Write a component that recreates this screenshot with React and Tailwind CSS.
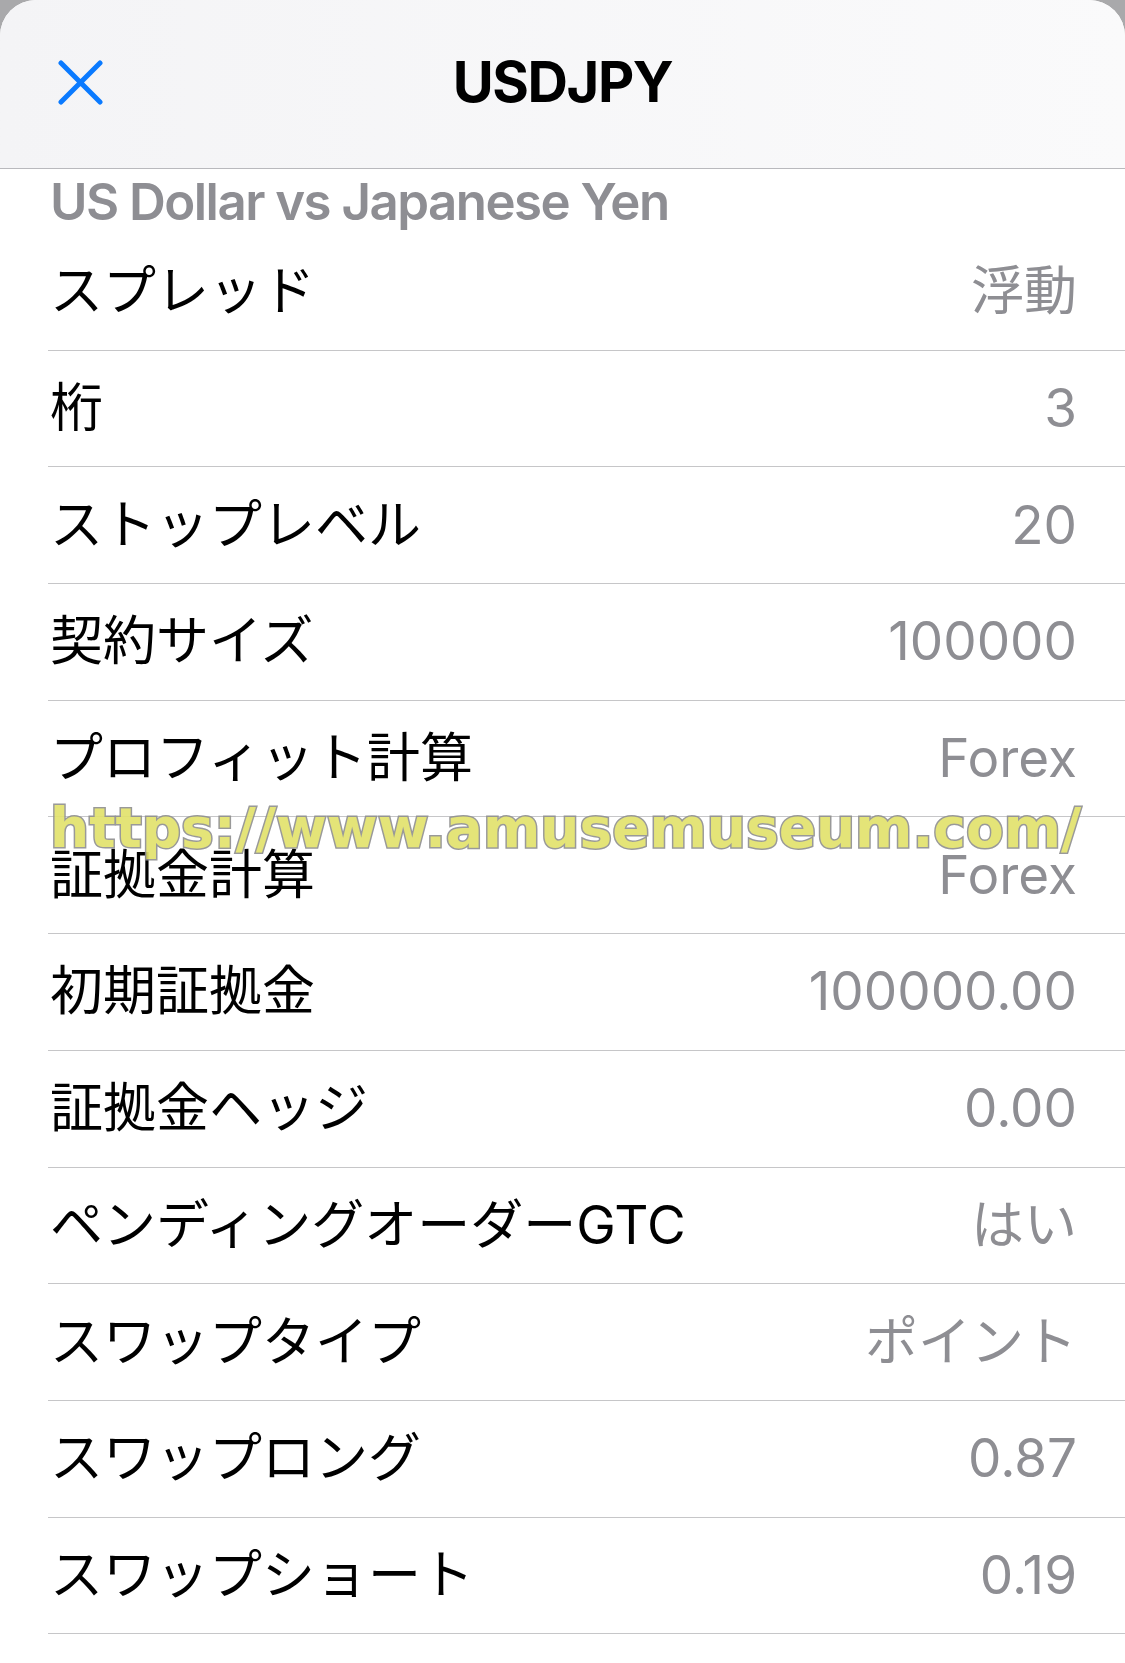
const rows = [
  { label: 'スプレッド', value: '浮動' },
  { label: '桁', value: '3' },
  { label: 'ストップレベル', value: '20' },
  { label: '契約サイズ', value: '100000' },
  { label: 'プロフィット計算', value: 'Forex' },
  { label: '証拠金計算', value: 'Forex' },
  { label: '初期証拠金', value: '100000.00' },
  { label: '証拠金ヘッジ', value: '0.00' },
  { label: 'ペンディングオーダーGTC', value: 'はい' },
  { label: 'スワップタイプ', value: 'ポイント' },
  { label: 'スワップロング', value: '0.87' },
  { label: 'スワップショート', value: '0.19' },
]

function CloseIcon() {
  return (
    <svg width="45" height="45" viewBox="0 0 45 45" className="text-[#0a7aff]">
      <path d="M3 3 L42 42 M42 3 L3 42" stroke="currentColor" strokeWidth="5" strokeLinecap="round" fill="none" />
    </svg>
  )
}

function Row({ label, value }) {
  return (
    <div className="flex h-[116.7px] items-center justify-between border-b border-[#c6c6c8] pl-[2px] pr-[48px]">
      <span className="text-[53px] leading-none text-black">{label}</span>
      <span className="text-[53px] leading-none text-[#8e8e93]">{value}</span>
    </div>
  )
}

export default function App() {
  return (
    <div className="w-[1125px] min-h-[1663px] bg-[#a9a9ab] font-['Inter','Noto_Sans_CJK_JP',sans-serif]">
      <div className="relative min-h-[1663px] overflow-hidden rounded-t-[36px] bg-white">
        <header className="relative flex h-[169px] items-center justify-center border-b border-[#b9b9bd] bg-gradient-to-r from-[#f4f4f6] to-[#fafafb] pb-[5px]">
          <div className="absolute left-[58px] top-[60px]">
            <CloseIcon />
          </div>
          <h1 className="text-[56px] font-bold leading-none tracking-[-0.025em] text-black">USDJPY</h1>
        </header>

        <div className="flex h-[65px] items-center pl-[50px]">
          <p className="text-[51px] font-semibold leading-none tracking-[-0.03em] text-[#8e8e93]">US Dollar vs Japanese Yen</p>
        </div>

        <div className="pl-[48px]">
          {rows.map((r) => (
            <Row key={r.label} {...r} />
          ))}
        </div>

        {/* watermark over the list */}
        <div className="pointer-events-none absolute left-[50px] top-[793px] whitespace-nowrap font-['DejaVu_Sans',sans-serif] text-[55px] font-bold leading-[70px] text-[#e2e26a] opacity-90 [-webkit-text-stroke:3px_#8f8f8f] [paint-order:stroke_fill]">
          https://www.amusemuseum.com/
        </div>
      </div>
    </div>
  )
}
